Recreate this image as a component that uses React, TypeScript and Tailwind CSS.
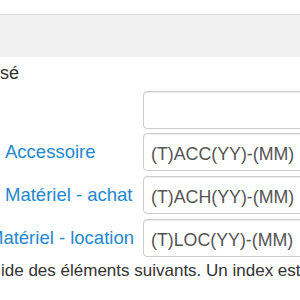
import React from "react";

const rows: { label: string; value: string; align: "left" | "right" | "none"; mt: string }[] = [
  { label: "", value: "", align: "none", mt: "mt-[6px]" },
  { label: "Accessoire", value: "(T)ACC(YY)-(MM)", align: "left", mt: "mt-[4px]" },
  { label: "Matériel - achat", value: "(T)ACH(YY)-(MM)", align: "left", mt: "mt-[5px]" },
  { label: "Matériel - location", value: "(T)LOC(YY)-(MM)", align: "right", mt: "mt-[5px]" },
];

export default function App() {
  return (
    <div
      className="w-[300px] h-[300px] overflow-hidden bg-white text-[#333]"
      style={{ fontFamily: '"Liberation Sans", Arial, Helvetica, sans-serif' }}
    >
      <div className="h-[14px]" />
      <div className="h-[43px] border-t border-[#dcdcdc] bg-[#f1f1f1]" />
      <div className="mt-[4px] h-[24px] leading-[24px] text-[18px] whitespace-nowrap">sé</div>
      {rows.map((r, i) => (
        <div key={i} className={`${r.mt} flex h-[38px] w-[340px]`}>
          <div
            className={`w-[143px] shrink-0 flex pt-[9px] pr-[9px] ${
              r.align === "right" ? "justify-end pl-0" : "justify-start pl-[5px]"
            }`}
          >
            <span className="text-[18.5px] leading-[20px] text-[#2388cf] whitespace-nowrap">{r.label}</span>
          </div>
          <div className="w-[180px] shrink-0 h-[38px] rounded-[4px] border border-[#cccccc] shadow-[inset_0_1px_1px_rgba(0,0,0,0.075)] pl-[7px] pt-[10px]">
            <span className="block text-[17.8px] leading-[20px] text-[#555] whitespace-nowrap">{r.value}</span>
          </div>
        </div>
      ))}
      <div className="mt-[4px] ml-[1px] text-[17px] leading-[20px] whitespace-nowrap">
        ide des éléments suivants. Un index est
      </div>
    </div>
  );
}
